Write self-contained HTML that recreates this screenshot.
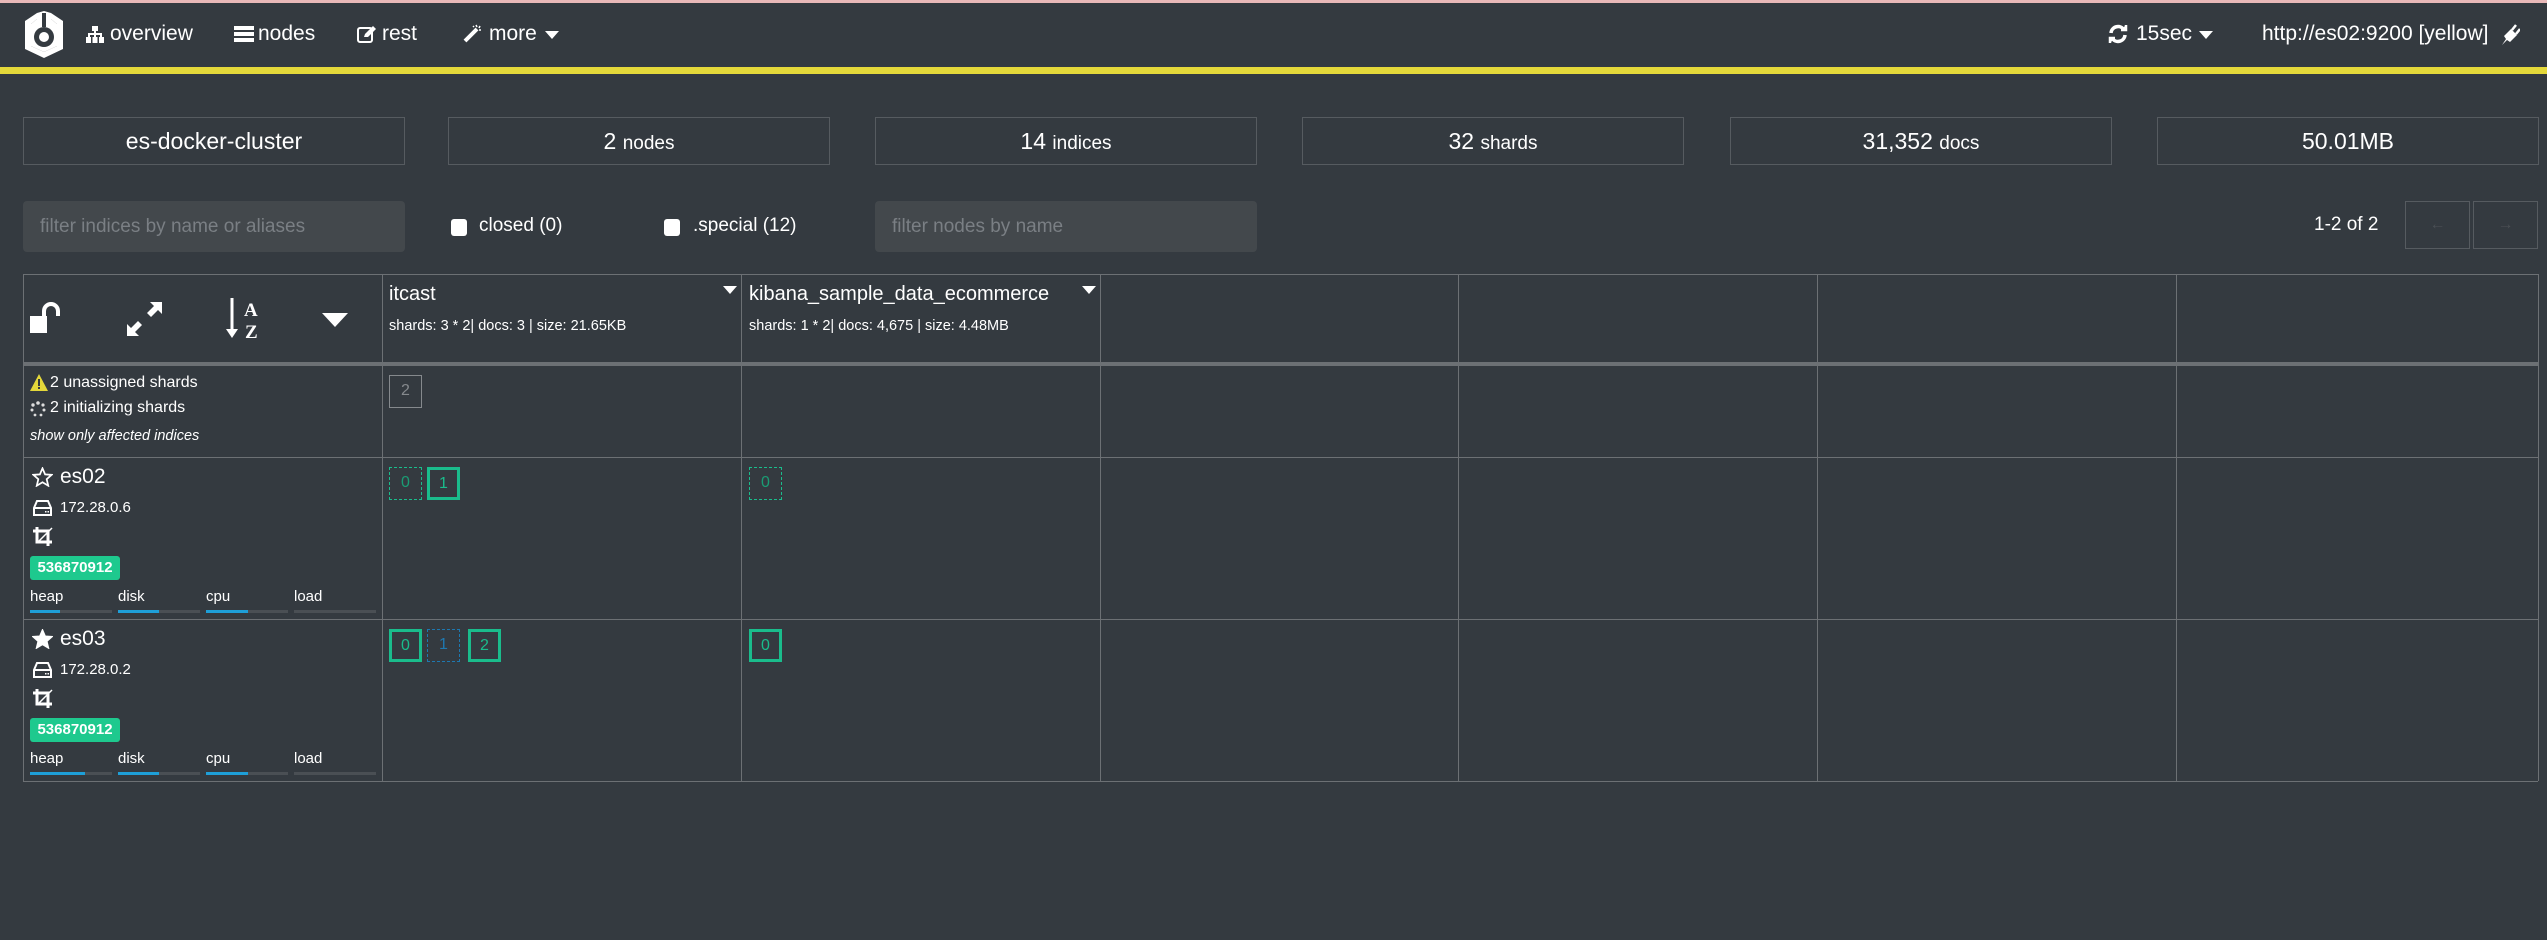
<!DOCTYPE html>
<html><head><meta charset="utf-8">
<style>
*{margin:0;padding:0;box-sizing:border-box}
body{width:2547px;height:940px;background:#343a40;font-family:"Liberation Sans",sans-serif;color:#fff;position:relative;overflow:hidden}
.a{position:absolute;white-space:nowrap}
.nav{font-size:21px;top:22px}
.stat{position:absolute;top:117px;height:48px;border:1px solid #565b60;text-align:center;line-height:46px;font-size:23px}
.stat small{font-size:19px}
.inp{position:absolute;top:201px;height:51px;background:#43484c;border-radius:4px;color:#7a7f84;font-size:19px;line-height:51px;padding-left:17px}
.cb{position:absolute;top:219px;width:16px;height:17px;background:#fff;border-radius:3px}
.vl{position:absolute;top:274px;height:507px;width:1px;background:#6c7074}
.hl{position:absolute;left:23px;width:2515px;height:1px;background:#6c7074}
.sh{position:absolute;width:33px;height:33px;text-align:center;line-height:29px;font-size:16px}
.ok{border:3px solid #1abc8c;color:#1abc8c;line-height:27px}
.rep{border:1px dashed #1abc8c;color:#1a9c74}
.ini{border:1px dashed #1e78b0;color:#1e78b0}
.badge{position:absolute;left:30px;width:90px;height:24px;background:#1ec98e;border-radius:3px;font-weight:bold;font-size:15px;text-align:center;line-height:24px}
.lbl{position:absolute;font-size:15px}
.bar{position:absolute;height:3px;width:82px;background:#4a4f54}
.bar i{display:block;height:3px;background:#1e9fd8}
</style></head><body>
<div class="a" style="left:0;top:0;width:2547px;height:3px;background:#e8b8b8"></div>
<!-- logo -->
<svg class="a" style="left:22px;top:11px" width="44" height="48" viewBox="0 0 44 48"><path d="M15 2 L3 10 V38 L22 47 L41 38 V10 L29 2 V8 L35 13 V35 L22 41 L9 35 V13 L15 8 Z" fill="#fff"/><path d="M9 13 L15 8 V2 L22 0 L29 2 V8 L35 13 V35 L22 41 L9 35Z" fill="#fff"/><circle cx="22" cy="26" r="10" fill="#343a40"/><circle cx="22" cy="26" r="5" fill="#fff"/><rect x="20" y="2" width="4" height="14" fill="#343a40"/></svg>
<svg class="a" style="left:86px;top:26px" width="18" height="17" viewBox="0 0 18 17" fill="#fff"><rect x="6" y="0" width="6" height="5"/><rect x="8" y="5" width="2" height="3"/><rect x="2" y="7" width="14" height="2"/><rect x="2" y="9" width="2" height="2"/><rect x="8" y="9" width="2" height="2"/><rect x="14" y="9" width="2" height="2"/><rect x="0" y="11" width="5" height="6"/><rect x="6.5" y="11" width="5" height="6"/><rect x="13" y="11" width="5" height="6"/></svg>
<div class="a nav" style="left:110px">overview</div>
<svg class="a" style="left:234px;top:26px" width="20" height="16" viewBox="0 0 20 16" fill="#fff"><rect y="0" width="20" height="4"/><rect y="6" width="20" height="4"/><rect y="12" width="20" height="4"/></svg>
<div class="a nav" style="left:258px">nodes</div>
<svg class="a" style="left:357px;top:25px" width="20" height="18" viewBox="0 0 20 18"><rect x="1" y="3" width="14" height="14" rx="2" fill="none" stroke="#fff" stroke-width="2"/><path d="M7 12 L8 9 L16 1 L19 4 L11 12 Z" fill="#fff"/></svg>
<div class="a nav" style="left:382px">rest</div>
<svg class="a" style="left:463px;top:23px" width="20" height="20" viewBox="0 0 20 20"><path d="M2 18 L14 6" stroke="#fff" stroke-width="4"/><path d="M13 2l1 2M17 3l-1 2M18 7h-2M10 3l1 1" stroke="#fff" stroke-width="1.5"/></svg>
<div class="a nav" style="left:489px">more</div>
<svg class="a" style="left:545px;top:31px" width="14" height="8"><path d="M0 0H14L7 8Z" fill="#fff"/></svg>
<svg class="a" style="left:2108px;top:24px" width="20" height="20" viewBox="0 0 20 20" fill="none" stroke="#fff" stroke-width="3.5"><path d="M3 9 A7 7 0 0 1 16 6"/><path d="M17 11 A7 7 0 0 1 4 14"/><path d="M13 6h5V1" stroke-width="2.5" fill="#fff"/><path d="M7 14H2v5" stroke-width="2.5" fill="#fff"/></svg>
<div class="a nav" style="left:2136px">15sec</div>
<svg class="a" style="left:2199px;top:31px" width="14" height="8"><path d="M0 0H14L7 8Z" fill="#fff"/></svg>
<div class="a nav" style="left:2262px">http://es02:9200 [yellow]</div>
<svg class="a" style="left:2500px;top:24px" width="20" height="22" viewBox="0 0 20 22"><path d="M2 21 L6 15 L4 12 L11 5 L17 11 L10 18 L7 16Z" fill="#fff"/><path d="M12 6 L16 1 M16 10 L20 5" stroke="#fff" stroke-width="2.5"/></svg>
<div class="a" style="left:0;top:67px;width:2547px;height:7px;background:#e4d83a"></div>

<div class="stat" style="left:23px;width:382px">es-docker-cluster</div>
<div class="stat" style="left:448px;width:382px">2 <small>nodes</small></div>
<div class="stat" style="left:875px;width:382px">14 <small>indices</small></div>
<div class="stat" style="left:1302px;width:382px">32 <small>shards</small></div>
<div class="stat" style="left:1730px;width:382px">31,352 <small>docs</small></div>
<div class="stat" style="left:2157px;width:382px">50.01MB</div>

<div class="inp" style="left:23px;width:382px">filter indices by name or aliases</div>
<div class="cb" style="left:451px"></div><div class="a" style="left:479px;top:215px;font-size:19px">closed (0)</div>
<div class="cb" style="left:664px"></div><div class="a" style="left:693px;top:215px;font-size:19px">.special (12)</div>
<div class="inp" style="left:875px;width:382px">filter nodes by name</div>
<div class="a" style="left:2314px;top:214px;font-size:19px">1-2 of 2</div>
<div class="a" style="left:2405px;top:201px;width:65px;height:48px;border:1px solid #565b60;color:#4a4f54;text-align:center;line-height:46px">←</div>
<div class="a" style="left:2473px;top:201px;width:65px;height:48px;border:1px solid #565b60;color:#4a4f54;text-align:center;line-height:46px">→</div>

<!-- table grid -->
<div class="hl" style="top:274px"></div>
<div class="hl" style="top:362px;height:4px"></div>
<div class="hl" style="top:457px"></div>
<div class="hl" style="top:619px"></div>
<div class="hl" style="top:781px"></div>
<div class="vl" style="left:23px"></div>
<div class="vl" style="left:382px"></div>
<div class="vl" style="left:741px"></div>
<div class="vl" style="left:1100px"></div>
<div class="vl" style="left:1458px"></div>
<div class="vl" style="left:1817px"></div>
<div class="vl" style="left:2176px"></div>
<div class="vl" style="left:2538px"></div>

<!-- header icons -->
<svg class="a" style="left:30px;top:302px" width="40" height="32" viewBox="0 0 40 32"><rect x="0" y="14" width="17" height="17" fill="#fff"/><path d="M14 14 V9 A7 7 0 0 1 28 9 V14" stroke="#fff" stroke-width="4" fill="none"/></svg>
<svg class="a" style="left:127px;top:302px" width="36" height="34" viewBox="0 0 36 34" fill="#fff"><path d="M35 0 V12 L31 8 L24 15 L20 11 L27 4 L23 0Z"/><path d="M0 34 V22 L4 26 L11 19 L15 23 L8 30 L12 34Z"/></svg>
<svg class="a" style="left:224px;top:298px" width="40" height="42" viewBox="0 0 40 42"><path d="M8 0 V32" stroke="#fff" stroke-width="3"/><path d="M2 31 H14 L8 40Z" fill="#fff"/><text x="20" y="18" font-family="Liberation Serif,serif" font-weight="bold" font-size="19" fill="#fff">A</text><text x="21" y="40" font-family="Liberation Serif,serif" font-weight="bold" font-size="19" fill="#fff">Z</text></svg>
<svg class="a" style="left:322px;top:313px" width="26" height="14"><path d="M0 0H26L13 14Z" fill="#fff"/></svg>

<div class="a" style="left:389px;top:283px;font-size:20px">itcast</div>
<div class="a" style="left:389px;top:318px;font-size:14.5px">shards: 3 * 2| docs: 3 | size: 21.65KB</div>
<svg class="a" style="left:723px;top:286px" width="14" height="8"><path d="M0 0H14L7 8Z" fill="#fff"/></svg>
<div class="a" style="left:749px;top:283px;font-size:20px">kibana_sample_data_ecommerce</div>
<div class="a" style="left:749px;top:318px;font-size:14.5px">shards: 1 * 2| docs: 4,675 | size: 4.48MB</div>
<svg class="a" style="left:1082px;top:286px" width="14" height="8"><path d="M0 0H14L7 8Z" fill="#fff"/></svg>

<!-- unassigned row -->
<svg class="a" style="left:30px;top:374px" width="18" height="17" viewBox="0 0 18 17"><path d="M9 0 L18 17 H0Z" fill="#e4d83a"/><rect x="8" y="5" width="2" height="7" fill="#343a40"/><rect x="8" y="13" width="2" height="2" fill="#343a40"/></svg>
<div class="a" style="left:50px;top:374px;font-size:16px">2 unassigned shards</div>
<svg class="a" style="left:30px;top:401px" width="16" height="16" viewBox="0 0 16 16" fill="#ddd"><circle cx="8" cy="2" r="1.8"/><circle cx="13" cy="4" r="1.6"/><circle cx="14" cy="9" r="1.5"/><circle cx="11" cy="14" r="1.4"/><circle cx="5" cy="14" r="1.4"/><circle cx="2" cy="9" r="1.5"/><circle cx="3" cy="4" r="1.7"/></svg>
<div class="a" style="left:50px;top:399px;font-size:16px">2 initializing shards</div>
<div class="a" style="left:30px;top:428px;font-size:14.5px;font-style:italic">show only affected indices</div>
<div class="sh" style="left:389px;top:375px;border:1px solid #85898d;color:#85898d">2</div>

<!-- es02 -->
<svg class="a" style="left:32px;top:467px" width="21" height="20" viewBox="0 0 24 23"><path d="M12 1.5 L15 8.5 L22.5 9 L16.8 14 L18.6 21.5 L12 17.5 L5.4 21.5 L7.2 14 L1.5 9 L9 8.5Z" fill="none" stroke="#fff" stroke-width="2"/></svg>
<div class="a" style="left:60px;top:465px;font-size:21px">es02</div>
<svg class="a" style="left:33px;top:500px" width="19" height="16" viewBox="0 0 19 16"><path d="M4 1 H15 L18 8 V15 H1 V8Z M1 8 H18" fill="none" stroke="#fff" stroke-width="2"/><rect x="12" y="11" width="1.5" height="1.5" fill="#fff"/><rect x="14.5" y="11" width="1.5" height="1.5" fill="#fff"/></svg>
<div class="a" style="left:60px;top:499px;font-size:15px">172.28.0.6</div>
<svg class="a" style="left:33px;top:527px" width="20" height="19" viewBox="0 0 20 19"><path d="M4 0 V15 H19 M0 4 H15 V19" fill="none" stroke="#fff" stroke-width="3"/><path d="M19 1 L6 14" stroke="#fff" stroke-width="1.5"/></svg>
<div class="badge" style="top:556px">536870912</div>
<div class="lbl" style="left:30px;top:588px">heap</div><div class="lbl" style="left:118px;top:588px">disk</div><div class="lbl" style="left:206px;top:588px">cpu</div><div class="lbl" style="left:294px;top:588px">load</div>
<div class="bar" style="left:30px;top:610px"><i style="width:30px"></i></div>
<div class="bar" style="left:118px;top:610px"><i style="width:41px"></i></div>
<div class="bar" style="left:206px;top:610px"><i style="width:42px"></i></div>
<div class="bar" style="left:294px;top:610px"></div>
<div class="sh rep" style="left:389px;top:467px">0</div>
<div class="sh ok" style="left:427px;top:467px">1</div>
<div class="sh rep" style="left:749px;top:467px">0</div>

<!-- es03 -->
<svg class="a" style="left:32px;top:629px" width="21" height="20" viewBox="0 0 24 23"><path d="M12 1.5 L15 8.5 L22.5 9 L16.8 14 L18.6 21.5 L12 17.5 L5.4 21.5 L7.2 14 L1.5 9 L9 8.5Z" fill="#fff" stroke="#fff" stroke-width="2"/></svg>
<div class="a" style="left:60px;top:627px;font-size:21px">es03</div>
<svg class="a" style="left:33px;top:662px" width="19" height="16" viewBox="0 0 19 16"><path d="M4 1 H15 L18 8 V15 H1 V8Z M1 8 H18" fill="none" stroke="#fff" stroke-width="2"/><rect x="12" y="11" width="1.5" height="1.5" fill="#fff"/><rect x="14.5" y="11" width="1.5" height="1.5" fill="#fff"/></svg>
<div class="a" style="left:60px;top:661px;font-size:15px">172.28.0.2</div>
<svg class="a" style="left:33px;top:689px" width="20" height="19" viewBox="0 0 20 19"><path d="M4 0 V15 H19 M0 4 H15 V19" fill="none" stroke="#fff" stroke-width="3"/><path d="M19 1 L6 14" stroke="#fff" stroke-width="1.5"/></svg>
<div class="badge" style="top:718px">536870912</div>
<div class="lbl" style="left:30px;top:750px">heap</div><div class="lbl" style="left:118px;top:750px">disk</div><div class="lbl" style="left:206px;top:750px">cpu</div><div class="lbl" style="left:294px;top:750px">load</div>
<div class="bar" style="left:30px;top:772px"><i style="width:55px"></i></div>
<div class="bar" style="left:118px;top:772px"><i style="width:41px"></i></div>
<div class="bar" style="left:206px;top:772px"><i style="width:42px"></i></div>
<div class="bar" style="left:294px;top:772px"></div>
<div class="sh ok" style="left:389px;top:629px">0</div>
<div class="sh ini" style="left:427px;top:629px">1</div>
<div class="sh ok" style="left:468px;top:629px">2</div>
<div class="sh ok" style="left:749px;top:629px">0</div>
</body></html>
